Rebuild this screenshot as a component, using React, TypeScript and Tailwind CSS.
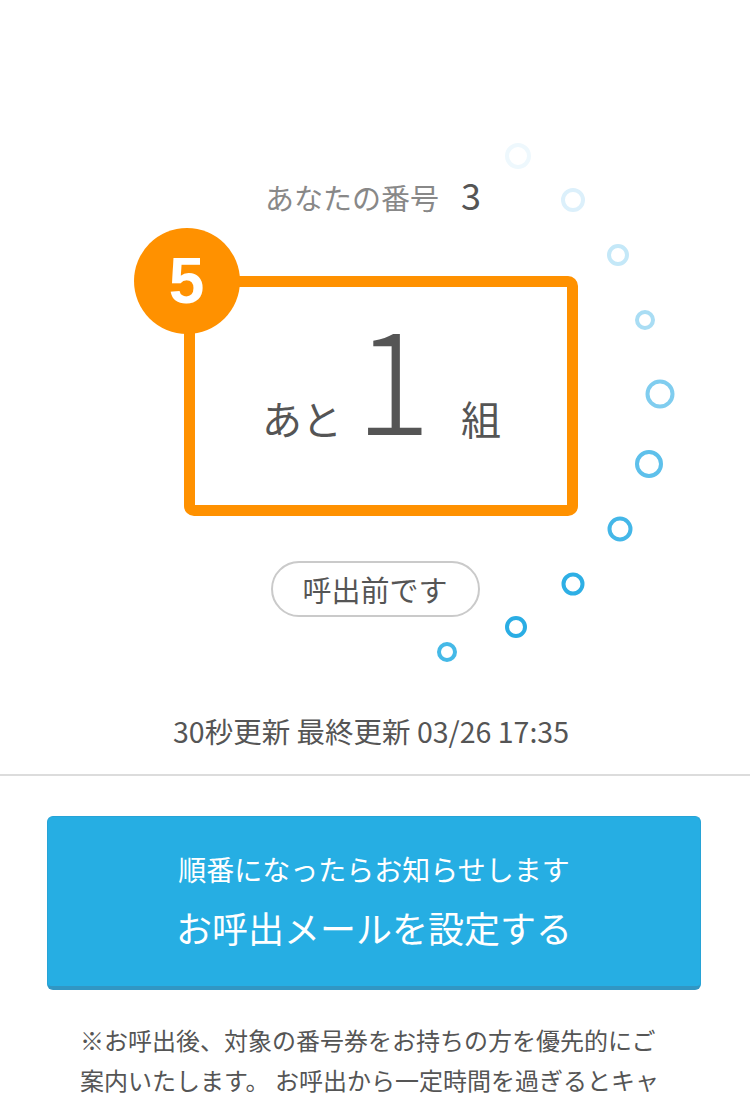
import React from 'react';

const dots = [
  { cx: 518, cy: 156, r: 11, color: '#eef8fd' },
  { cx: 573, cy: 200, r: 10, color: '#dcf0fb' },
  { cx: 618, cy: 255, r: 9, color: '#c4e8f8' },
  { cx: 645, cy: 320, r: 8, color: '#a9ddf4' },
  { cx: 660, cy: 394, r: 12.5, color: '#80cdef' },
  { cx: 649, cy: 464, r: 12, color: '#5ec0eb' },
  { cx: 620, cy: 529, r: 10.5, color: '#44b7e8' },
  { cx: 573, cy: 584, r: 9.5, color: '#2eafe5' },
  { cx: 516, cy: 627, r: 9, color: '#2aade4' },
  { cx: 447, cy: 652, r: 8, color: '#45b9e7' },
];

const LoadingDots: React.FC = () => (
  <svg
    className="pointer-events-none absolute left-0 top-0"
    width={750}
    height={700}
    viewBox="0 0 750 700"
    fill="none"
  >
    {dots.map((d, i) => (
      <circle key={i} cx={d.cx} cy={d.cy} r={d.r} stroke={d.color} strokeWidth={4} />
    ))}
  </svg>
);

export default function App() {
  return (
    <div
      className="relative w-[750px] min-h-[1096px] overflow-hidden bg-white text-[#555]"
      style={{ fontFamily: '"Noto Sans CJK JP", "Noto Sans", sans-serif' }}
    >
      <LoadingDots />

      <div className="relative flex flex-col items-center pt-[174px]">
        {/* your number */}
        <div className="flex h-[40px] items-baseline pr-[4px]">
          <span className="text-[29px] leading-[40px] text-[#888]">あなたの番号</span>
          <span className="ml-[22px] text-[36px] leading-[40px] text-[#555]">3</span>
        </div>

        {/* remaining groups */}
        <div className="mt-[62px] pl-[11px]">
          <div className="relative flex h-[240px] w-[394px] items-center justify-center rounded-[10px] border-[11px] border-[#ff9100] bg-white">
            <div className="absolute -left-[61px] -top-[59px] flex h-[106px] w-[106px] items-center justify-center rounded-full bg-[#ff9100]">
              <span
                className="text-[64px] font-bold leading-none text-white"
                style={{ fontFamily: '"Liberation Sans", Arial, sans-serif' }}
              >
                5
              </span>
            </div>
            <div className="-mt-[46px] flex items-baseline pl-[2px]">
              <span className="text-[40px] leading-none">あと</span>
              <span className="ml-[13px] mr-[30px] text-[142px] font-light leading-none text-[#555]">1</span>
              <span className="text-[40px] leading-none">組</span>
            </div>
          </div>
        </div>

        {/* status pill */}
        <div className="mt-[45px] flex h-[56px] w-[209px] items-center justify-center rounded-full border-2 border-[#cacaca]">
          <span className="text-[29px] leading-none text-[#555]">呼出前です</span>
        </div>

        {/* update time */}
        <p className="mt-[94px] pr-[8px] text-[28.5px] leading-[40px] text-[#555]">30秒更新 最終更新 03/26 17:35</p>
      </div>

      <div className="relative mt-[23px] h-[2px] w-full bg-[#dcdcdc]" />

      {/* mail button */}
      <div className="ml-[47px] mt-[40px] flex h-[174px] w-[654px] flex-col items-center justify-center rounded-[6px] border border-[#27a3d6] border-b-4 border-b-[#3196c3] bg-[#26aee3] pb-[8px] text-white">
        <span className="text-[28px] leading-[40px]">順番になったらお知らせします</span>
        <span className="mt-[18px] text-[36px] leading-[40px]">お呼出メールを設定する</span>
      </div>

      {/* note */}
      <p className="mt-[30px] px-[80px] text-[24px] leading-[40px] text-[#555]">
        ※お呼出後、対象の番号券をお持ちの方を優先的にご案内いたします。 お呼出から一定時間を過ぎるとキャンセルとなります。
      </p>
    </div>
  );
}
